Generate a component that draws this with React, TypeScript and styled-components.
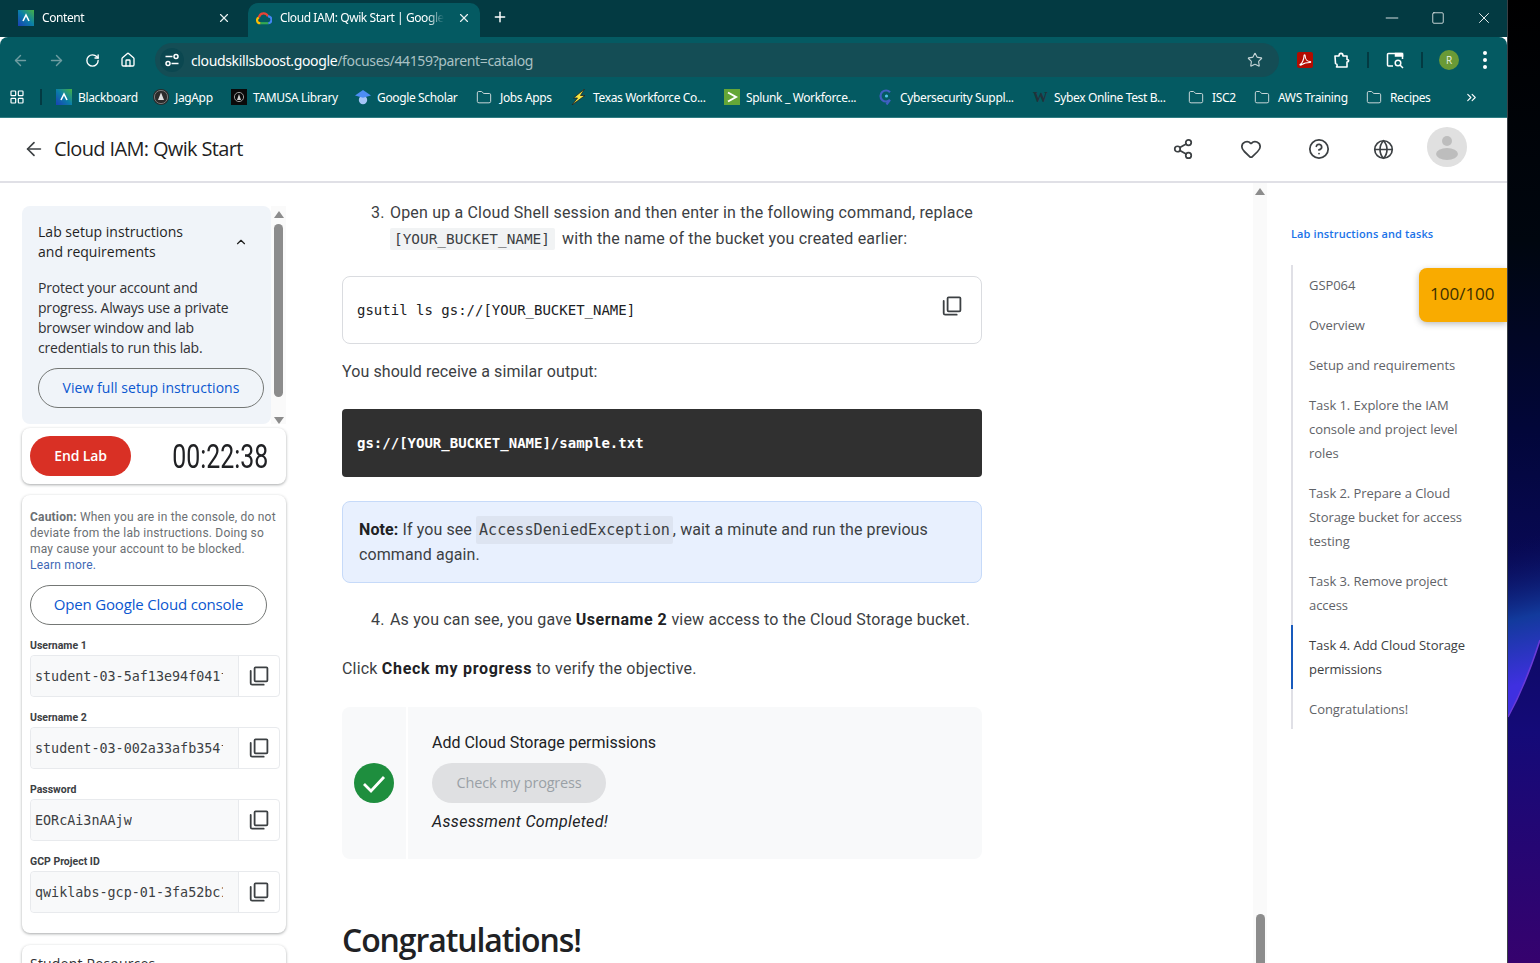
import React from "react";
import styled, { createGlobalStyle } from "styled-components";
import {
  ArrowLeft,
  ArrowRight,
  ChevronUp,
  ChevronsRight,
  CircleHelp,
  Folder,
  Globe,
  Heart,
  House,
  LayoutGrid,
  Minus,
  Plus,
  RotateCw,
  Share2,
  Square,
  Star,
  X,
} from "lucide-react";

const GlobalStyle = createGlobalStyle`
  html, body { margin: 0; padding: 0; height: 100%; overflow: hidden; }
  body { font-family: "Roboto", "Liberation Sans", sans-serif; color: #1f1f1f; }
  * { box-sizing: border-box; }
`;

const SANS = `"Open Sans", "Noto Sans", sans-serif`;
const CHROME = `"Noto Sans", "Open Sans", sans-serif`;
const MONO = `"DejaVu Sans Mono", "Liberation Mono", monospace`;

const Desktop = styled.div`
  width: 1540px;
  height: 963px;
  display: flex;
  overflow: hidden;
  background: #000;
`;

const Wallpaper = styled.div`
  flex: 1;
  border-left: 1px solid #3a3f45;
  background: linear-gradient(
    180deg,
    #000 0%,
    #00060f 25%,
    #02063a 45%,
    #0a0a5c 62%,
    #140a78 76%,
    #36026e 100%
  );
  svg { display: block; }
`;

const Browser = styled.div`
  position: relative;
  width: 1507px;
  height: 963px;
  flex: none;
  display: flex;
  flex-direction: column;
  background: #fff;
  overflow: hidden;
`;

const TabStrip = styled.div`
  height: 37px;
  flex: none;
  display: flex;
  align-items: flex-end;
  padding-left: 8px;
  background: #033a42;
  color: #fff;
`;

const Tab = styled.div<{ $active?: boolean }>`
  width: 232px;
  height: 34px;
  display: flex;
  align-items: center;
  padding: 0 4px 5px ${(p) => (p.$active ? "8px" : "10px")};
  border-radius: 10px 10px 0 0;
  background: ${(p) => (p.$active ? "#045a62" : "transparent")};
  margin-right: ${(p) => (p.$active ? "0" : "8px")};
`;

const TabTitle = styled.span`
  flex: 1;
  margin-left: 8px;
  font: 12px ${CHROME};
  letter-spacing: -0.42px;
  white-space: nowrap;
  overflow: hidden;
  -webkit-mask-image: linear-gradient(90deg, #000 90%, transparent 100%);
`;

const TabClose = styled.span`
  width: 24px;
  display: flex;
  justify-content: center;
  color: #e8f0f0;
  margin-left: 8px;
`;

const NewTab = styled.span`
  display: flex;
  margin: 0 0 12px 12px;
`;

const WindowControls = styled.div`
  margin-left: auto;
  align-self: stretch;
  display: flex;
  align-items: center;
  padding-bottom: 2px;
`;

const WindowButton = styled.span`
  width: 46px;
  display: flex;
  justify-content: center;
`;

const Toolbar = styled.div`
  height: 41px;
  flex: none;
  display: flex;
  align-items: flex-start;
  background: #045a62;
  border-radius: 8px 8px 0 0;
  color: #fff;
  padding: 6px 0 0 2px;
`;

const NavButton = styled.span<{ $dim?: boolean; $gap?: number }>`
  width: 36px;
  height: 34px;
  flex: none;
  margin-left: ${(p) => p.$gap ?? 0}px;
  display: flex;
  align-items: center;
  justify-content: center;
  color: ${(p) => (p.$dim ? "#6f9da1" : "#fff")};
`;

const Omnibox = styled.div`
  width: 1124px;
  height: 34px;
  margin-left: 9px;
  flex: none;
  display: flex;
  align-items: center;
  border-radius: 17px;
  background: #144d55;
  padding-left: 5px;
`;

const TuneChip = styled.span`
  width: 24px;
  height: 24px;
  border-radius: 50%;
  background: #0b4750;
  display: flex;
  align-items: center;
  justify-content: center;
`;

const Url = styled.span`
  margin-left: 7px;
  font: 14px ${CHROME};
  letter-spacing: -0.36px;
  color: #a9c1c4;
  b { font-weight: 400; color: #fff; }
`;

const StarSlot = styled.span`
  margin-left: auto;
  margin-right: 16px;
  display: flex;
  color: #c4d4d6;
`;

const ToolDivider = styled.span<{ $gap: number }>`
  width: 2px;
  height: 16px;
  margin: 9px 0 0 ${(p) => p.$gap}px;
  flex: none;
  background: #033a42;
`;

const ProfileDot = styled.span`
  width: 20px;
  height: 20px;
  border-radius: 50%;
  background: #6a9a36;
  color: #e8f0e0;
  font: 10px ${SANS};
  display: flex;
  align-items: center;
  justify-content: center;
`;

const MenuDots = styled.span`
  width: 4px;
  display: flex;
  flex-direction: column;
  gap: 3px;
  i {
    width: 4px;
    height: 4px;
    border-radius: 50%;
    background: #fff;
  }
`;

const BookmarkBar = styled.div`
  height: 40px;
  flex: none;
  display: flex;
  align-items: center;
  background: #045a62;
  border-bottom: 1px solid #2f7d83;
  color: #fff;
  padding: 0 0 1px 9px;
`;

const AppsSlot = styled.span`
  width: 18px;
  display: flex;
  flex: none;
`;

const BarDivider = styled.span`
  width: 2px;
  height: 16px;
  background: #033a42;
  margin: 0 14px 0 13px;
  flex: none;
`;

const Bookmark = styled.span<{ $w: number; $gap?: number }>`
  width: ${(p) => p.$w}px;
  flex: none;
  display: flex;
  align-items: center;
  gap: ${(p) => p.$gap ?? 6}px;
  font: 12px ${CHROME};
  letter-spacing: -0.36px;
  white-space: nowrap;
`;

const IconBox = styled.span`
  width: 16px;
  height: 16px;
  flex: none;
  display: flex;
  align-items: center;
  justify-content: center;
`;

const SybexMark = styled.span`
  font: 700 15px "Liberation Serif", serif;
  color: #22323a;
  width: 16px;
  text-align: center;
`;

const PageHeader = styled.header`
  height: 65px;
  flex: none;
  display: flex;
  align-items: center;
  padding: 0 40px 2px 23px;
  border-bottom: 2px solid #e0e0e6;
  color: #3c4043;
`;

const PageTitle = styled.h1`
  margin: 0 0 0 9px;
  font: 400 20px ${SANS};
  letter-spacing: -0.65px;
  color: #1f1f1f;
`;

const HeaderIcons = styled.div`
  margin-left: auto;
  display: flex;
  align-items: center;
`;

const HeaderIcon = styled.span<{ $w: number }>`
  width: ${(p) => p.$w}px;
  display: flex;
  justify-content: center;
  padding-top: 1px;
`;

const AvatarCircle = styled.span`
  width: 40px;
  height: 40px;
  margin: 0 0 4px 14px;
  border-radius: 50%;
  background: #e0e0e0;
  display: flex;
  align-items: center;
  justify-content: center;
`;

const Body = styled.div`
  flex: 1;
  display: flex;
  min-height: 0;
`;

const LeftColumn = styled.aside`
  width: 300px;
  flex: none;
  padding: 23px 0 0 22px;
  display: flex;
  flex-direction: column;
`;

const SetupRow = styled.div`
  width: 264px;
  display: flex;
  height: 218px;
`;

const SetupCard = styled.section`
  width: 249px;
  height: 218px;
  background: #f0f4f9;
  border-radius: 8px;
  padding: 16px 7px 0 16px;
`;

const SetupHead = styled.div`
  display: flex;
  align-items: center;
  justify-content: space-between;
  padding-right: 16px;
  font: 14px/20px ${SANS};
  letter-spacing: 0.02px;
  color: #1f1f1f;
`;

const SetupText = styled.p`
  margin: 16px 0 10px;
  padding-right: 16px;
  font: 14px/20px ${SANS};
  letter-spacing: -0.2px;
  color: #303134;
`;

const PillLink = styled.button<{ $w: number; $size?: number }>`
  width: ${(p) => p.$w}px;
  height: 40px;
  display: block;
  background: transparent;
  border: 1px solid #747775;
  border-radius: 20px;
  color: #0b57d0;
  font: 500 ${(p) => p.$size ?? 14}px ${SANS};
  letter-spacing: ${(p) => (p.$size ? "-0.18px" : "0.05px")};
  padding: 0 0 2px;
`;

const Track = styled.div<{ $w: number }>`
  width: ${(p) => p.$w}px;
  flex: none;
  display: flex;
  flex-direction: column;
  align-items: center;
  background: #fafafa;
`;

const ArrowUp = styled.span`
  width: 0;
  height: 0;
  margin-top: 5px;
  border-left: 5px solid transparent;
  border-right: 5px solid transparent;
  border-bottom: 7px solid #8c8c8c;
`;

const ArrowDown = styled.span`
  width: 0;
  height: 0;
  border-left: 5px solid transparent;
  border-right: 5px solid transparent;
  border-top: 7px solid #8c8c8c;
`;

const SideThumb = styled.span`
  width: 9px;
  height: 173px;
  margin: 6px 0 auto;
  background: #8c8c8c;
  border-radius: 5px;
`;

const WhiteCard = styled.section`
  width: 264px;
  flex: none;
  background: #fff;
  border-radius: 8px;
  box-shadow: 0 1px 3px rgba(60, 64, 67, 0.45);
`;

const TimerCard = styled(WhiteCard)`
  height: 56px;
  margin-top: 4px;
  padding: 8px 18px 0 8px;
  display: flex;
  justify-content: space-between;
`;

const EndButton = styled.button`
  width: 101px;
  height: 40px;
  border: 0;
  border-radius: 20px;
  background: #d93025;
  color: #fff;
  font: 600 14px ${SANS};
  letter-spacing: -0.15px;
  padding: 0 0 2px;
`;

const Timer = styled.span`
  font: 400 33px/42px "Roboto", sans-serif;
  color: #202124;
  transform: scaleX(0.755);
  transform-origin: right center;
`;

const CredentialsCard = styled(WhiteCard)`
  height: 438px;
  margin-top: 11px;
  padding: 14px 6px 0 8px;
`;

const Caution = styled.p`
  margin: 0 0 12px;
  font: 12px/16px "Roboto", sans-serif;
  letter-spacing: 0.2px;
  color: #6b6f73;
  b { font-weight: 700; }
  a { color: #3f68b5; }
`;

const FieldLabel = styled.div`
  margin: 14px 0 2px;
  font: 700 10.5px/14px "Roboto", sans-serif;
  color: #3c4043;
`;

const FieldRow = styled.div`
  height: 42px;
  display: flex;
  border: 1px solid #e8eaed;
  border-radius: 4px;
  margin-bottom: 14px;
`;

const FieldValue = styled.div`
  width: 208px;
  flex: none;
  display: flex;
  align-items: center;
  background: #f8f9fa;
  padding: 0 15px 0 4px;
  border-right: 1px solid #e8eaed;
  font: 13.4px ${MONO};
  color: #3c4043;
  border-radius: 4px 0 0 4px;
`;

const FieldClip = styled.span`
  overflow: hidden;
  white-space: nowrap;
`;

const FieldCopy = styled.div`
  flex: 1;
  display: flex;
  align-items: center;
  justify-content: center;
  color: #3c4043;
`;

const ResourcesCard = styled(WhiteCard)`
  height: 60px;
  margin-top: 12px;
  padding: 10px 8px;
  font: 14px/18px ${SANS};
  letter-spacing: 0.2px;
  color: #303134;
`;

const Main = styled.main`
  width: 953px;
  flex: none;
  padding: 17px 0 0 42px;
  overflow: hidden;
  height: 780px;
`;

const Article = styled.article`
  width: 640px;
  font: 16px/25.6px "Roboto", sans-serif;
  color: #3c4043;
`;

const StepList = styled.div`
  display: flex;
  padding-left: 29px;
  letter-spacing: 0.18px;
`;

const StepNumber = styled.span`
  width: 19px;
  flex: none;
`;

const InlineCode = styled.code`
  font: 14.4px/1 ${MONO};
  letter-spacing: 0;
  background: #f1f3f4;
  padding: 3px 5px 3px 4px;
  margin-right: 3px;
  border-radius: 2px;
`;

const NoteCode = styled.code`
  font: 15.1px/1 ${MONO};
  letter-spacing: 0;
  background: #dde4f1;
  padding: 5px 3px;
  border-radius: 2px;
`;

const CodeBox = styled.div`
  height: 68px;
  margin: 25px 0 15px;
  display: flex;
  align-items: center;
  justify-content: space-between;
  padding: 0 19px 1px 14px;
  border: 1px solid #dadce0;
  border-radius: 8px;
  font: 14px ${MONO};
  color: #202124;
`;

const CodeCopy = styled.span`
  display: flex;
  margin-bottom: 7px;
  color: #3c4043;
`;

const Paragraph = styled.p`
  margin: 0;
  letter-spacing: 0.09px;
`;

const OutputBox = styled.div`
  height: 68px;
  margin: 24px 0 24px;
  display: flex;
  align-items: center;
  padding: 0 15px;
  background: #303030;
  border-radius: 4px;
  font: 700 14px ${MONO};
  color: #fff;
`;

const NoteBox = styled.div`
  height: 82px;
  padding: 15px 16px;
  background: #e8f0fe;
  border: 1px solid #c6daf9;
  border-radius: 8px;
  letter-spacing: 0.1px;
  b { color: #202124; }
`;

const StepSpaced = styled(StepList)`
  margin: 24px 0 24px;
  b { color: #202124; font-weight: 700; letter-spacing: 0.5px; }
`;

const ClickLine = styled(Paragraph)`
  letter-spacing: 0.2px;
  b { color: #202124; font-weight: 700; letter-spacing: 0.7px; }
`;

const Checkpoint = styled.div`
  height: 152px;
  margin-top: 25px;
  display: flex;
  background: #f8f9fa;
  border-radius: 8px;
`;

const CheckpointMark = styled.div`
  width: 66px;
  flex: none;
  display: flex;
  align-items: center;
  padding-left: 12px;
  border-right: 2px solid #fff;
`;

const CheckCircle = styled.span`
  width: 40px;
  height: 40px;
  border-radius: 50%;
  background: #1e8e3e;
  display: flex;
`;

const CheckpointBody = styled.div`
  padding: 23px 0 0 24px;
  color: #202124;
`;

const DisabledButton = styled.button`
  display: block;
  width: 174px;
  height: 40px;
  margin: 7px 0 6px;
  border: 0;
  border-radius: 20px;
  background: #dfe0e2;
  color: #9aa0a6;
  font: 500 14.5px ${SANS};
  letter-spacing: -0.2px;
`;

const Italic = styled.em`
  color: #202124;
  letter-spacing: 0.33px;
`;

const Congrats = styled.h2`
  margin: 61px 0 0;
  font: 600 32px/40px ${SANS};
  letter-spacing: -1.1px;
  color: #202124;
`;

const MainTrack = styled(Track)`
  height: 780px;
  justify-content: flex-start;
`;

const MainThumb = styled.span`
  width: 9px;
  height: 49px;
  margin-top: auto;
  background: #8c8c8c;
  border-radius: 5px 5px 0 0;
`;

const Toc = styled.nav`
  flex: 1;
  padding: 44px 0 0 24px;
`;

const TocHeading = styled.div`
  font: 600 11px/14px ${SANS};
  letter-spacing: 0.12px;
  color: #1a73e8;
  margin-bottom: 24px;
`;

const TocList = styled.ul`
  width: 192px;
  margin: 0;
  padding: 0;
  list-style: none;
  border-left: 2px solid #e0e0e6;
`;

const TocItem = styled.li<{ $active?: boolean }>`
  margin-left: -2px;
  padding: 8px 12px 8px 16px;
  font: ${(p) => (p.$active ? 500 : 400)} 13px/24px ${SANS};
  letter-spacing: -0.06px;
  color: ${(p) => (p.$active ? "#3c4043" : "#5f6368")};
  border-left: 2px solid ${(p) => (p.$active ? "#185abc" : "transparent")};
`;

const ScoreBadge = styled.div`
  position: absolute;
  top: 268px;
  right: 0;
  width: 88px;
  height: 54px;
  display: flex;
  align-items: center;
  padding: 0 0 3px 11px;
  background: #f9ab00;
  border-radius: 8px 0 0 8px;
  box-shadow: 0 2px 6px rgba(60, 64, 67, 0.35);
  font: 17px ${SANS};
  color: #3c2f00;
`;

const WallpaperStreak = () => (
  <svg width="32" height="963" viewBox="0 0 32 963">
    <defs>
      <linearGradient id="streak" x1="0" y1="540" x2="32" y2="680" gradientUnits="userSpaceOnUse">
        <stop offset="0" stopColor="#0a0a5c" stopOpacity="0" />
        <stop offset="0.55" stopColor="#123a9c" />
        <stop offset="1" stopColor="#3f30e0" />
      </linearGradient>
    </defs>
    <path d="M0 717C12 695 23 668 32 640V520H0z" fill="url(#streak)" />
    <path d="M0 717C12 695 23 668 32 640" fill="none" stroke="#6a3ad8" strokeWidth="1.5" />
  </svg>
);

const BlackboardIcon = () => (
  <svg width="16" height="16" viewBox="0 0 16 16">
    <defs>
      <linearGradient id="bb" x1="1" y1="0" x2="0" y2="1">
        <stop offset="0" stopColor="#46b044" />
        <stop offset="0.5" stopColor="#0a7fa8" />
        <stop offset="1" stopColor="#1a3fb5" />
      </linearGradient>
    </defs>
    <rect width="16" height="16" fill="url(#bb)" />
    <path d="M5 11 8 5l3 6" fill="none" stroke="#fff" strokeWidth="1.6" />
  </svg>
);

const CloudIcon = () => (
  <svg width="16" height="16" viewBox="0 0 16 16" fill="none" strokeWidth="2.2">
    <path d="M4.6 13.2H4a3 3 0 0 1-1-5.8" stroke="#fbbc04" />
    <path d="M3 7.4a5 5 0 0 1 4-4" stroke="#ea4335" />
    <path d="M7 3.4a5 5 0 0 1 5 3" stroke="#ea4335" />
    <path d="M12 6.4a3.4 3.4 0 0 1 .2 6.8" stroke="#4285f4" />
    <path d="M12.2 13.2H4.6" stroke="#34a853" />
  </svg>
);

const JagIcon = () => (
  <svg width="16" height="16" viewBox="0 0 16 16">
    <circle cx="8" cy="8" r="8" fill="#2b2b2b" />
    <circle cx="8" cy="8" r="6.6" fill="none" stroke="#777" strokeWidth="1" />
    <path d="M8 3.5 11 11H5z" fill="#ddd" />
  </svg>
);

const TamusaIcon = () => (
  <svg width="16" height="16" viewBox="0 0 16 16">
    <rect width="16" height="16" fill="#0a0a0a" />
    <circle cx="8" cy="8" r="4.6" fill="none" stroke="#999" strokeWidth="1" />
    <path d="M8 5 10 11H6z" fill="#ccc" />
  </svg>
);

const ScholarIcon = () => (
  <svg width="16" height="16" viewBox="0 0 16 16">
    <circle cx="8" cy="11" r="4.2" fill="#a5c4f7" />
    <path d="M0 6.5 8 1l8 5.5-8 2.2z" fill="#4d8df5" />
  </svg>
);

const BoltIcon = () => (
  <svg width="16" height="16" viewBox="0 0 16 16">
    <path d="M13.500 0 2.500 9h4L1 16l13-9.500H9.500z" fill="#f5e642" stroke="#222" strokeWidth="0.8" />
  </svg>
);

const SplunkIcon = () => (
  <svg width="16" height="16" viewBox="0 0 16 16">
    <rect width="16" height="16" fill="#65a637" />
    <path d="M4 3.5 12 8l-8 4.5" fill="none" stroke="#fff" strokeWidth="2" />
  </svg>
);

const CyberIcon = () => (
  <svg width="16" height="16" viewBox="0 0 16 16" fill="none">
    <path d="M12 3.2a5.5 5.5 0 1 0 0 7.6L8.500 15.500" stroke="#3f5fc0" strokeWidth="2.2" />
    <circle cx="8.500" cy="7" r="1.6" fill="#4fc3e8" />
  </svg>
);

const PdfIcon = () => (
  <svg width="16" height="16" viewBox="0 0 16 16">
    <rect width="16" height="16" rx="2" fill="#b30b00" />
    <path d="M3 12.500c2-1 4-5 4-8.500 0-1.500 1.200-1.500 1.200 0 0 3 2 5.500 4.800 5.500 1 0 1 1 0 1-3 0-6 .5-8 2-1 .8-2.500.8-2 0z" fill="none" stroke="#fff" strokeWidth="1.1" />
  </svg>
);

const ExtensionIcon = () => (
  <svg width="18" height="18" viewBox="0 0 18 18" fill="none" stroke="#fff" strokeWidth="1.6" strokeLinejoin="round">
    <path d="M2 5h4c0-3.500 4-3.500 4 0h4v3.500c2.200 0 2.200 2.500 0 2.500v5H3.500c1-1.500 1-3-1-3.500z" />
  </svg>
);

const TabSearchIcon = () => (
  <svg width="18" height="18" viewBox="0 0 18 18" fill="none" stroke="#fff" strokeWidth="1.5">
    <path d="M7 15H2.500a1 1 0 0 1-1-1V3.500a1 1 0 0 1 1-1h13a1 1 0 0 1 1 1V8" />
    <path d="M9.500 2.500h7V5h-7z" fill="#fff" />
    <circle cx="12" cy="12" r="2.8" />
    <path d="m14 14 3 3" />
  </svg>
);

const TuneIcon = () => (
  <svg width="16" height="16" viewBox="0 0 16 16" fill="none" stroke="#fff" strokeWidth="1.5">
    <path d="M1.500 4.500h7" />
    <circle cx="12" cy="4.500" r="2" />
    <path d="M14.500 11.500h-7" />
    <circle cx="4" cy="11.500" r="2" />
  </svg>
);

const CopyIcon = ({ size = 20 }: { size?: number }) => (
  <svg width={size} height={size} viewBox="0 0 20 20" fill="none" stroke="currentColor" strokeWidth="1.8" strokeLinejoin="round">
    <rect x="5.6" y="1.3" width="12.8" height="14" rx="1" />
    <path d="M1.700 5v12.200a1.500 1.500 0 0 0 1.500 1.500h11.500" strokeLinecap="round" />
  </svg>
);

const AvatarGlyph = () => (
  <svg width="24" height="26" viewBox="0 0 24 26" fill="#bdbdbd">
    <circle cx="12" cy="7" r="5" />
    <ellipse cx="12" cy="20" rx="11" ry="6" />
  </svg>
);

const FolderGlyph = () => <Folder size={17} color="#c8d6d8" strokeWidth={1.5} />;

const bookmarks: { label: string; w: number; gap?: number; icon: React.ReactNode }[] = [
  { label: "Blackboard", w: 97, icon: <BlackboardIcon /> },
  { label: "JagApp", w: 78, icon: <JagIcon /> },
  { label: "TAMUSA Library", w: 124, icon: <TamusaIcon /> },
  { label: "Google Scholar", w: 121, icon: <ScholarIcon /> },
  { label: "Jobs Apps", w: 95, gap: 8, icon: <FolderGlyph /> },
  { label: "Texas Workforce Co...", w: 153, icon: <BoltIcon /> },
  { label: "Splunk _ Workforce...", w: 154, icon: <SplunkIcon /> },
  { label: "Cybersecurity Suppl...", w: 154, icon: <CyberIcon /> },
  { label: "Sybex Online Test B...", w: 156, icon: <SybexMark>W</SybexMark> },
  { label: "ISC2", w: 66, gap: 8, icon: <FolderGlyph /> },
  { label: "AWS Training", w: 112, gap: 8, icon: <FolderGlyph /> },
  { label: "Recipes", w: 90, gap: 8, icon: <FolderGlyph /> },
];

const credentials = [
  { label: "Username 1", value: "student-03-5af13e94f041f" },
  { label: "Username 2", value: "student-03-002a33afb354f" },
  { label: "Password", value: "EORcAi3nAAjw" },
  { label: "GCP Project ID", value: "qwiklabs-gcp-01-3fa52bc1" },
];

const tocItems = [
  "GSP064",
  "Overview",
  "Setup and requirements",
  "Task 1. Explore the IAM console and project level roles",
  "Task 2. Prepare a Cloud Storage bucket for access testing",
  "Task 3. Remove project access",
  "Task 4. Add Cloud Storage permissions",
  "Congratulations!",
];

export default function App() {
  return (
    <Desktop>
      <GlobalStyle />
      <Browser>
        <TabStrip>
          <Tab>
            <IconBox><BlackboardIcon /></IconBox>
            <TabTitle>Content</TabTitle>
            <TabClose><X size={14} strokeWidth={2} /></TabClose>
          </Tab>
          <Tab $active>
            <IconBox><CloudIcon /></IconBox>
            <TabTitle>Cloud IAM: Qwik Start | Google Cloud Skills</TabTitle>
            <TabClose><X size={14} strokeWidth={2} /></TabClose>
          </Tab>
          <NewTab><Plus size={16} strokeWidth={2.2} /></NewTab>
          <WindowControls>
            <WindowButton><Minus size={20} strokeWidth={1} /></WindowButton>
            <WindowButton><Square size={14} strokeWidth={1.3} /></WindowButton>
            <WindowButton><X size={18} strokeWidth={1.2} /></WindowButton>
          </WindowControls>
        </TabStrip>

        <Toolbar>
          <NavButton $dim><ArrowLeft size={17} /></NavButton>
          <NavButton $dim><ArrowRight size={17} /></NavButton>
          <NavButton><RotateCw size={15} strokeWidth={2.2} /></NavButton>
          <NavButton><House size={16} /></NavButton>
          <Omnibox>
            <TuneChip><TuneIcon /></TuneChip>
            <Url><b>cloudskillsboost.google</b>/focuses/44159?parent=catalog</Url>
            <StarSlot><Star size={16} strokeWidth={1.7} /></StarSlot>
          </Omnibox>
          <NavButton $gap={8}><PdfIcon /></NavButton>
          <NavButton $gap={1}><ExtensionIcon /></NavButton>
          <ToolDivider $gap={7} />
          <NavButton $gap={8}><TabSearchIcon /></NavButton>
          <ToolDivider $gap={8} />
          <NavButton $gap={8}><ProfileDot>R</ProfileDot></NavButton>
          <NavButton>
            <MenuDots><i /><i /><i /></MenuDots>
          </NavButton>
        </Toolbar>

        <BookmarkBar>
          <AppsSlot><LayoutGrid size={16} strokeWidth={1.8} /></AppsSlot>
          <BarDivider />
          {bookmarks.map((b) => (
            <Bookmark key={b.label} $w={b.w} $gap={b.gap}>
              <IconBox>{b.icon}</IconBox>
              {b.label}
            </Bookmark>
          ))}
          <ChevronsRight size={15} strokeWidth={1.8} style={{ marginLeft: 8 }} />
        </BookmarkBar>

        <PageHeader>
          <ArrowLeft size={22} strokeWidth={1.8} />
          <PageTitle>Cloud IAM: Qwik Start</PageTitle>
          <HeaderIcons>
            <HeaderIcon $w={68}><Share2 size={22} strokeWidth={1.9} /></HeaderIcon>
            <HeaderIcon $w={68}><Heart size={22} strokeWidth={1.9} /></HeaderIcon>
            <HeaderIcon $w={68}><CircleHelp size={22} strokeWidth={1.9} /></HeaderIcon>
            <HeaderIcon $w={60}><Globe size={21} strokeWidth={1.9} /></HeaderIcon>
            <AvatarCircle><AvatarGlyph /></AvatarCircle>
          </HeaderIcons>
        </PageHeader>

        <Body>
          <LeftColumn>
            <SetupRow>
              <SetupCard>
                <SetupHead>
                  <span>Lab setup instructions<br />and requirements</span>
                  <ChevronUp size={14} />
                </SetupHead>
                <SetupText>
                  Protect your account and progress. Always use a private browser window and lab credentials to run this lab.
                </SetupText>
                <PillLink $w={226}>View full setup instructions</PillLink>
              </SetupCard>
              <Track $w={15}>
                <ArrowUp />
                <SideThumb />
                <ArrowDown />
              </Track>
            </SetupRow>

            <TimerCard>
              <EndButton>End Lab</EndButton>
              <Timer>00:22:38</Timer>
            </TimerCard>

            <CredentialsCard>
              <Caution>
                <b>Caution:</b> When you are in the console, do not deviate from the lab instructions. Doing so may cause your account to be blocked.
                <br />
                <a>Learn more.</a>
              </Caution>
              <PillLink $w={237} $size={15}>Open Google Cloud console</PillLink>
              {credentials.map((c) => (
                <React.Fragment key={c.label}>
                  <FieldLabel>{c.label}</FieldLabel>
                  <FieldRow>
                    <FieldValue><FieldClip>{c.value}</FieldClip></FieldValue>
                    <FieldCopy><CopyIcon /></FieldCopy>
                  </FieldRow>
                </React.Fragment>
              ))}
            </CredentialsCard>

            <ResourcesCard>Student Resources</ResourcesCard>
          </LeftColumn>

          <Main>
            <Article>
              <StepList>
                <StepNumber>3.</StepNumber>
                <span>
                  Open up a Cloud Shell session and then enter in the following command, replace{" "}
                  <InlineCode>[YOUR_BUCKET_NAME]</InlineCode> with the name of the bucket you created earlier:
                </span>
              </StepList>
              <CodeBox>
                gsutil ls gs://[YOUR_BUCKET_NAME]
                <CodeCopy><CopyIcon /></CodeCopy>
              </CodeBox>
              <Paragraph>You should receive a similar output:</Paragraph>
              <OutputBox>gs://[YOUR_BUCKET_NAME]/sample.txt</OutputBox>
              <NoteBox>
                <b>Note:</b> If you see <NoteCode>AccessDeniedException</NoteCode>, wait a minute and run the previous command again.
              </NoteBox>
              <StepSpaced>
                <StepNumber>4.</StepNumber>
                <span>As you can see, you gave <b>Username 2</b> view access to the Cloud Storage bucket.</span>
              </StepSpaced>
              <ClickLine>Click <b>Check my progress</b> to verify the objective.</ClickLine>
              <Checkpoint>
                <CheckpointMark>
                  <CheckCircle>
                    <svg width="40" height="40" viewBox="0 0 40 40" fill="none" stroke="#fff" strokeWidth="2.8">
                      <path d="m10 21 7 7 13-14" />
                    </svg>
                  </CheckCircle>
                </CheckpointMark>
                <CheckpointBody>
                  <div>Add Cloud Storage permissions</div>
                  <DisabledButton>Check my progress</DisabledButton>
                  <Italic>Assessment Completed!</Italic>
                </CheckpointBody>
              </Checkpoint>
              <Congrats>Congratulations!</Congrats>
            </Article>
          </Main>

          <MainTrack $w={14}>
            <ArrowUp />
            <MainThumb />
          </MainTrack>

          <Toc>
            <TocHeading>Lab instructions and tasks</TocHeading>
            <TocList>
              {tocItems.map((t) => (
                <TocItem key={t} $active={t.startsWith("Task 4")}>{t}</TocItem>
              ))}
            </TocList>
          </Toc>
        </Body>

        <ScoreBadge>100/100</ScoreBadge>
      </Browser>
      <Wallpaper>
        <WallpaperStreak />
      </Wallpaper>
    </Desktop>
  );
}
